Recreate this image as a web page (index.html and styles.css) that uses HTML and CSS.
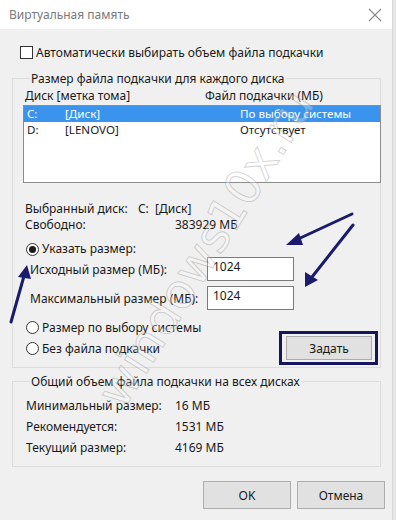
FILE: index.html
```html
<!DOCTYPE html>
<html lang="ru">
<head>
    <meta charset="UTF-8">
    <title>Виртуальная память</title>
    <link rel="stylesheet" href="styles.css">
</head>
<body>
    <div class="window">
        <div class="titlebar">
            <span class="title">Виртуальная память</span>
            <svg class="close" width="14" height="14" viewBox="0 0 14 14">
                <path d="M1 1 L13 13 M13 1 L1 13" stroke="#8a8a8a" stroke-width="1.1" fill="none"/>
            </svg>
        </div>

        <div class="content">
            <div class="check-row">
                <span class="checkbox"></span>
                <span>Автоматически выбирать объем файла подкачки</span>
            </div>

            <fieldset class="group">
                <legend>Размер файла подкачки для каждого диска</legend>
                <div class="list-head">
                    <span class="head-disk">Диск [метка тома]</span>
                    <span>Файл подкачки (МБ)</span>
                </div>
                <div class="listbox">
                    <div class="list-row selected">
                        <span class="col-letter">C:</span>
                        <span class="col-label">[Диск]</span>
                        <span>По выбору системы</span>
                    </div>
                    <div class="list-row">
                        <span class="col-letter">D:</span>
                        <span class="col-label">[LENOVO]</span>
                        <span>Отсутствует</span>
                    </div>
                </div>

                <div class="info">
                    <div class="info-row">
                        <span class="info-key">Выбранный диск:</span>
                        <span>C:&nbsp; [Диск]</span>
                    </div>
                    <div class="info-row">
                        <span class="info-key free">Свободно:</span>
                        <span>383929 МБ</span>
                    </div>
                </div>

                <div class="radio-row first">
                    <span class="radio checked"></span>
                    <span>Указать размер:</span>
                </div>
                <div class="size-row">
                    <span class="size-label">Исходный размер (МБ):</span>
                    <div class="edit">1024</div>
                </div>
                <div class="size-row second">
                    <span class="size-label">Максимальный размер (МБ):</span>
                    <div class="edit">1024</div>
                </div>

                <div class="bottom-row">
                    <div class="radios">
                        <div class="radio-row">
                            <span class="radio"></span>
                            <span>Размер по выбору системы</span>
                        </div>
                        <div class="radio-row">
                            <span class="radio"></span>
                            <span>Без файла подкачки</span>
                        </div>
                    </div>
                    <div class="highlight">
                        <button class="btn set-btn">Задать</button>
                    </div>
                </div>
            </fieldset>

            <fieldset class="group total">
                <legend>Общий объем файла подкачки на всех дисках</legend>
                <div class="total-row">
                    <span class="total-key">Минимальный размер:</span>
                    <span>16 МБ</span>
                </div>
                <div class="total-row">
                    <span class="total-key">Рекомендуется:</span>
                    <span>1531 МБ</span>
                </div>
                <div class="total-row">
                    <span class="total-key">Текущий размер:</span>
                    <span>4169 МБ</span>
                </div>
            </fieldset>

            <div class="dialog-buttons">
                <button class="btn">OK</button>
                <button class="btn">Отмена</button>
            </div>
        </div>

        <div class="watermark">windows10x.ru</div>

        <svg class="arrows" width="396" height="520" viewBox="0 0 396 520">
            <g stroke="#1b1b6e" stroke-width="3" stroke-linecap="round" fill="#1b1b6e">
                <line x1="352" y1="214" x2="296" y2="240"/>
                <line x1="353" y1="225" x2="312" y2="277"/>
                <line x1="11" y1="322" x2="24" y2="276"/>
            </g>
            <g fill="#1b1b6e">
                <polygon points="286,245 299,233 303,245"/>
                <polygon points="305,287 305,272 318,280"/>
                <polygon points="27,265 31,279 18,277"/>
            </g>
        </svg>
    </div>
</body>
</html>
```

FILE: styles.css
```css
body {
    margin: 0;
    background: #e6e6e6;
    font-family: "Noto Sans", "Open Sans", sans-serif;
    font-size: 12px;
    color: #1a1a1a;
}

.window {
    position: relative;
    width: 392px;
    height: 520px;
    background: #f0f0f0;
    border-right: 1px solid #d9d9d9;
    overflow: hidden;
}

.titlebar {
    height: 29px;
    background: #fff;
    display: flex;
    align-items: center;
    justify-content: space-between;
    padding: 0 8px 0 9px;
}

.title {
    color: #7a7a7a;
    font-size: 12px;
}

.close {
    margin-right: 2px;
}

.content {
    padding: 0 11px 0 12px;
}

.check-row {
    display: flex;
    align-items: center;
    gap: 3px;
    margin-top: 16px;
    padding-left: 8px;
    line-height: 15px;
}

.checkbox {
    width: 11px;
    height: 11px;
    border: 1px solid #333;
    background: #fff;
}

.group {
    margin: 11px 0 0;
    padding: 0 0 2px 10px;
    border: 1px solid #dcdcdc;
    min-inline-size: 0;
}

.group legend {
    margin-left: 7px;
    padding: 0 1px;
    line-height: 15px;
}

.list-head {
    display: flex;
    margin-top: 2px;
    padding-left: 2px;
    line-height: 15px;
}

.head-disk {
    width: 180px;
}

.listbox {
    margin-top: 2px;
    height: 76px;
    background: #fff;
    border: 1px solid #8c8c8c;
    margin-right: -1px;
}

.list-row {
    display: flex;
    height: 16px;
    line-height: 16px;
    font-size: 11.6px;
    padding-left: 3px;
}

.list-row.selected {
    background: #3a94ee;
    color: #fff;
}

.col-letter {
    width: 38px;
}

.col-label {
    width: 175px;
}

.info {
    margin-top: 18px;
    padding-left: 2px;
}

.info-row {
    display: flex;
    line-height: 16px;
}

.info-key {
    width: 113px;
}

.info-key.free {
    width: 150px;
}

.radio-row {
    display: flex;
    align-items: center;
    gap: 3px;
    padding-left: 3px;
    line-height: 21px;
}

.radio-row.first {
    margin-top: 8px;
    line-height: 16px;
}

.radio {
    position: relative;
    width: 11px;
    height: 11px;
    border: 1px solid #333;
    border-radius: 50%;
    background: #fff;
}

.radio.checked::after {
    content: "";
    position: absolute;
    left: 2px;
    top: 2px;
    width: 7px;
    height: 7px;
    border-radius: 50%;
    background: #1a1a1a;
}

.size-row {
    display: flex;
    align-items: center;
    padding-left: 7px;
}

.size-row.second {
    margin-top: 5px;
}

.size-label {
    width: 177px;
}

.edit {
    width: 80px;
    height: 21px;
    padding: 1px 0 0 5px;
    line-height: 16px;
    background: #fff;
    border: 1px solid #7a7a7a;
}

.bottom-row {
    display: flex;
    justify-content: space-between;
    margin-top: 7px;
}

.highlight {
    margin: 14px 2px 0 0;
    padding: 2px 3px 2px 4px;
    border: 3px solid #16165c;
}

.btn {
    font-family: inherit;
    font-size: 12px;
    color: #1a1a1a;
    background: #e1e1e1;
    border: 1px solid #adadad;
    padding: 0;
}

.set-btn {
    display: block;
    width: 86px;
    height: 24px;
}

.group.total {
    margin-top: 6px;
    padding-bottom: 8px;
}

.total-row {
    display: flex;
    padding-left: 3px;
    line-height: 21px;
}

.total-row:first-of-type {
    margin-top: 6px;
}

.total-key {
    width: 149px;
}

.dialog-buttons {
    display: flex;
    justify-content: flex-end;
    gap: 6px;
    margin-top: 14px;
    margin-right: -4px;
}

.dialog-buttons .btn {
    width: 88px;
    height: 28px;
}

.watermark {
    position: absolute;
    left: 205px;
    top: 248px;
    transform: translate(-50%, -50%) rotate(-58deg);
    font-family: "DejaVu Sans", sans-serif;
    font-size: 48px;
    color: rgba(255, 255, 255, 0.3);
    -webkit-text-stroke: 1px rgba(120, 120, 120, 0.32);
    white-space: nowrap;
    pointer-events: none;
}

.arrows {
    position: absolute;
    left: 0;
    top: 0;
}
```
